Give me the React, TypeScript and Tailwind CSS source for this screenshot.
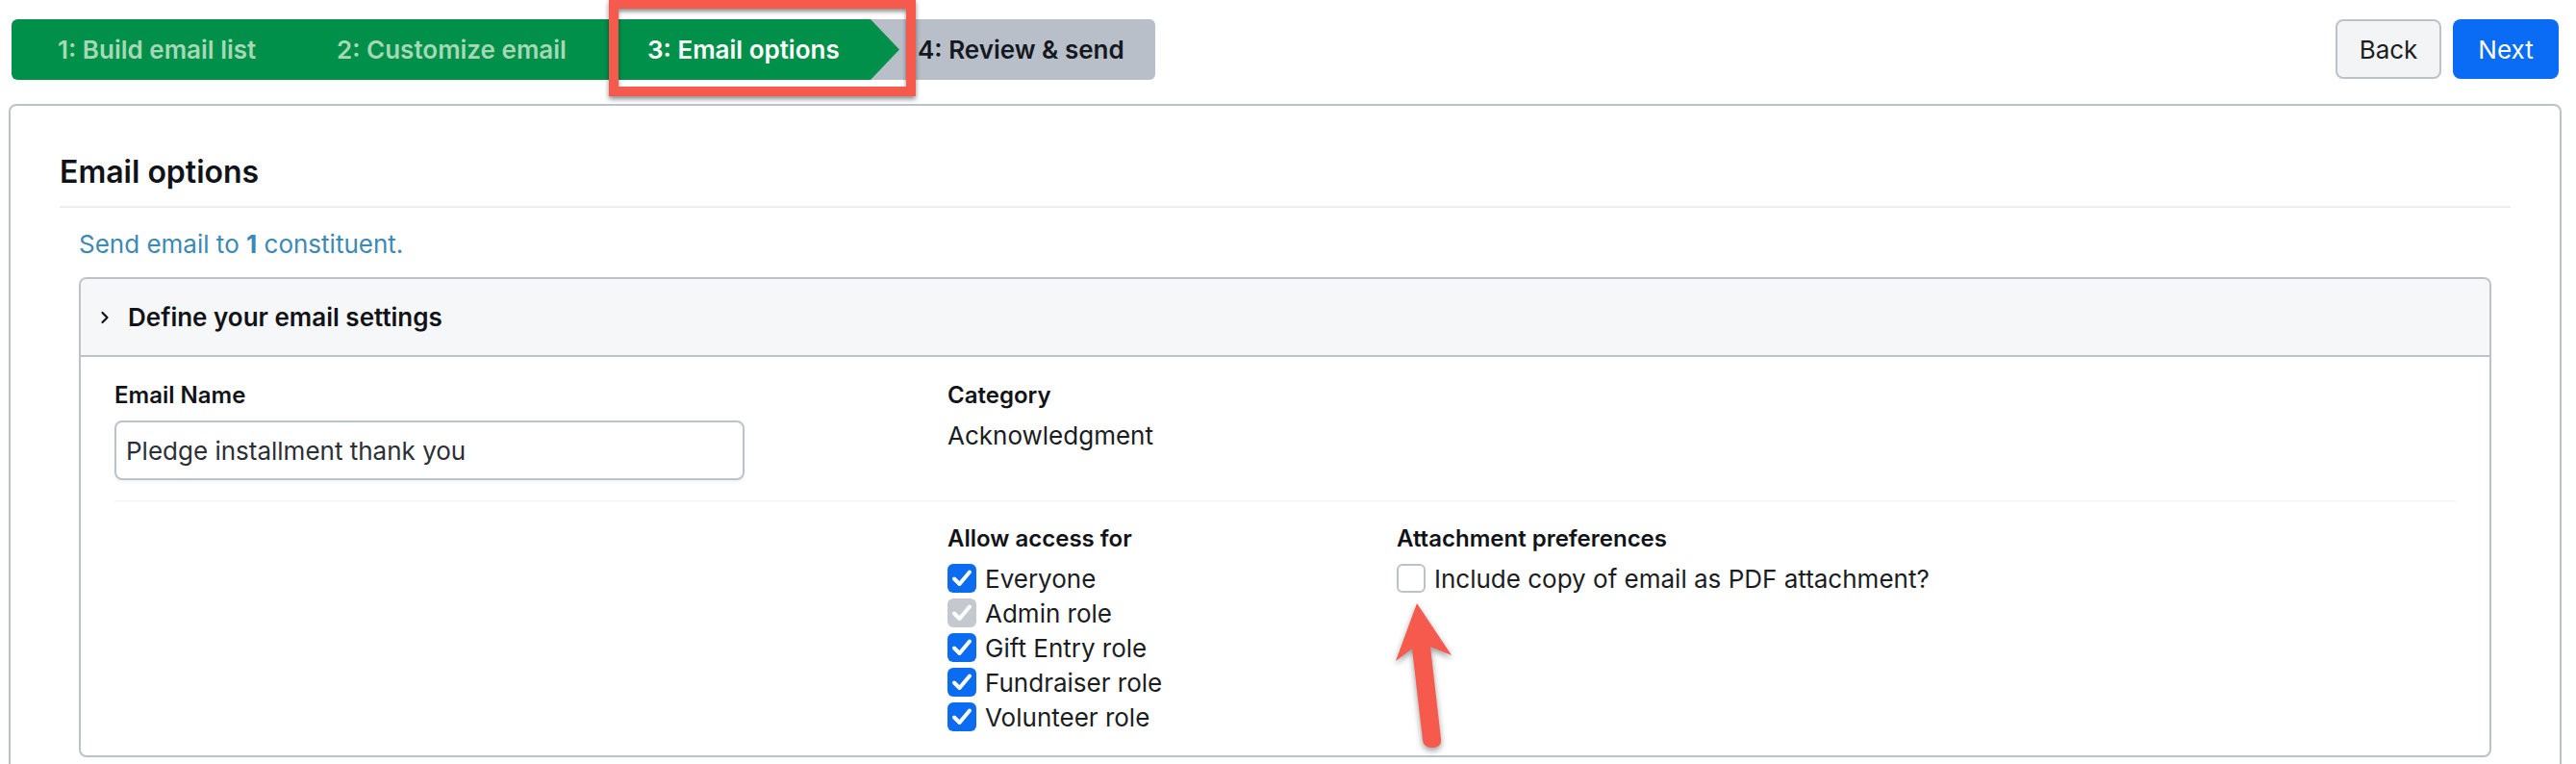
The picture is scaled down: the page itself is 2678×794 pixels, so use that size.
import { ReactNode } from "react";

const checkPath = "M7 15.5 L12.5 21 L23 8.5";

function Check({ state, children }: { state: "on" | "disabled" | "off"; children: ReactNode }) {
  const box =
    state === "on"
      ? "bg-[#0b6cf2]"
      : state === "disabled"
      ? "bg-[#c5c9cf]"
      : "bg-white border-2 border-[#bcc2ca]";
  return (
    <div className="flex items-center h-[36px] gap-[9px]">
      <span className={`w-[30px] h-[30px] rounded-[6px] flex items-center justify-center shrink-0 ${box}`}>
        {state !== "off" && (
          <svg width="30" height="30" viewBox="0 0 30 30">
            <path d={checkPath} fill="none" stroke="white" strokeWidth="4" strokeLinecap="round" strokeLinejoin="round" />
          </svg>
        )}
      </span>
      <span className="text-[26px] text-[#1b1d22]">{children}</span>
    </div>
  );
}

export default function App() {
  return (
    <div className="relative w-[2678px] h-[794px] overflow-hidden bg-white font-['Inter','Noto_Sans',sans-serif] flex flex-col">
      {/* top bar */}
      <div className="flex items-start justify-between pt-[20px] pl-[12px] pr-[18px] h-[108px] shrink-0">
        <div className="flex h-[63px] w-[1189px] bg-[#b8bfc8] rounded-[6px] overflow-hidden text-[26px] font-semibold leading-none">
          <div className="flex items-center bg-[#00904a] rounded-l-[6px]">
            <span className="w-[290px] pl-[48px] text-[#a6d8b6] whitespace-nowrap">1: Build email list</span>
            <span className="w-[332px] pl-[48px] text-[#a6d8b6] whitespace-nowrap">2: Customize email</span>
            <span className="w-[271px] pl-[39px] text-white whitespace-nowrap">3: Email options</span>
          </div>
          <svg width="30" height="63" viewBox="0 0 30 63" className="shrink-0">
            <polygon points="0,0 30,31.5 0,63" fill="#00904a" />
          </svg>
          <div className="flex items-center pl-[19px] text-[#141821] whitespace-nowrap">4: Review &amp; send</div>
        </div>
        <div className="flex gap-[12px]">
          <button className="w-[110px] h-[62px] rounded-[8px] border-2 border-[#bcc2ca] bg-[#f3f4f6] text-[26px] text-[#1b1d22]">
            Back
          </button>
          <button className="w-[110px] h-[62px] rounded-[8px] bg-[#0a6cf5] text-[26px] text-white">Next</button>
        </div>
      </div>

      {/* main card */}
      <div className="ml-[9px] w-[2654px] h-[720px] shrink-0 border-2 border-[#bcc2ca] rounded-[8px] px-[51px] pt-[49px]">
        <h1 className="text-[32px] leading-[40px] font-semibold text-[#111318] pb-[15px] border-b-2 border-[#eceef1]">
          Email options
        </h1>
        <div className="px-[20px]">
          <p className="mt-[20px] text-[26px] leading-[36px] text-[#3c89b4]">
            Send email to <b className="font-bold">1</b> constituent.
          </p>
          <div className="mt-[16px] border-2 border-[#bcc2ca] rounded-[8px] overflow-hidden">
            <div className="h-[81px] bg-[#f6f7f9] border-b-2 border-[#bcc2ca] flex items-center pl-[20px] gap-[19px]">
              <svg width="10" height="16" viewBox="0 0 10 16">
                <path d="M2.5 3 L7.5 8 L2.5 13" fill="none" stroke="#111318" strokeWidth="2.2" strokeLinecap="round" strokeLinejoin="round" />
              </svg>
              <span className="text-[26px] font-semibold text-[#111318]">Define your email settings</span>
            </div>
            <div className="px-[35px]">
              <div className="flex pt-[24px] pb-[21px] border-b border-[#f2f3f5]">
                <div className="w-[866px]">
                  <div className="text-[24px] leading-[32px] font-semibold text-[#111318] mb-[10px]">Email Name</div>
                  <div className="w-[655px] h-[62px] rounded-[8px] border-2 border-[#bcc2ca] shadow-[0_2px_4px_rgba(0,0,0,0.06)] flex items-center pl-[10px] text-[26px] text-[#2b2f36]">
                    Pledge installment thank you
                  </div>
                </div>
                <div>
                  <div className="text-[24px] leading-[32px] font-semibold text-[#111318]">Category</div>
                  <div className="text-[26px] leading-[36px] mt-[8px] text-[#1b1d22]">Acknowledgment</div>
                </div>
              </div>
              <div className="flex pt-[23px] pb-[22px]">
                <div className="w-[866px]" />
                <div className="w-[467px]">
                  <div className="text-[24px] leading-[32px] font-semibold text-[#111318] mb-[7px]">Allow access for</div>
                  <Check state="on">Everyone</Check>
                  <Check state="disabled">Admin role</Check>
                  <Check state="on">Gift Entry role</Check>
                  <Check state="on">Fundraiser role</Check>
                  <Check state="on">Volunteer role</Check>
                </div>
                <div>
                  <div className="text-[24px] leading-[32px] font-semibold text-[#111318] mb-[7px]">Attachment preferences</div>
                  <Check state="off">Include copy of email as PDF attachment?</Check>
                </div>
              </div>
            </div>
          </div>
        </div>
      </div>

      {/* annotations */}
      <div className="absolute left-[633px] top-[-1px] w-[319px] h-[101px] border-[10px] border-[#f65a4d] shadow-[0_3px_5px_rgba(0,0,0,0.45),inset_0_3px_4px_rgba(0,0,0,0.45)]" />
      <svg
        className="absolute left-[1445px] top-[622px] drop-shadow-[0_3px_3px_rgba(0,0,0,0.4)]"
        width="70"
        height="162"
        viewBox="0 0 70 162"
      >
        <path
          d="M28 5 L64 59 L42 50 L53 146 Q54 155 44 155 Q35 155 34 147 L23 52 L6 65 Z"
          fill="#f65a4d"
        />
      </svg>
    </div>
  );
}
